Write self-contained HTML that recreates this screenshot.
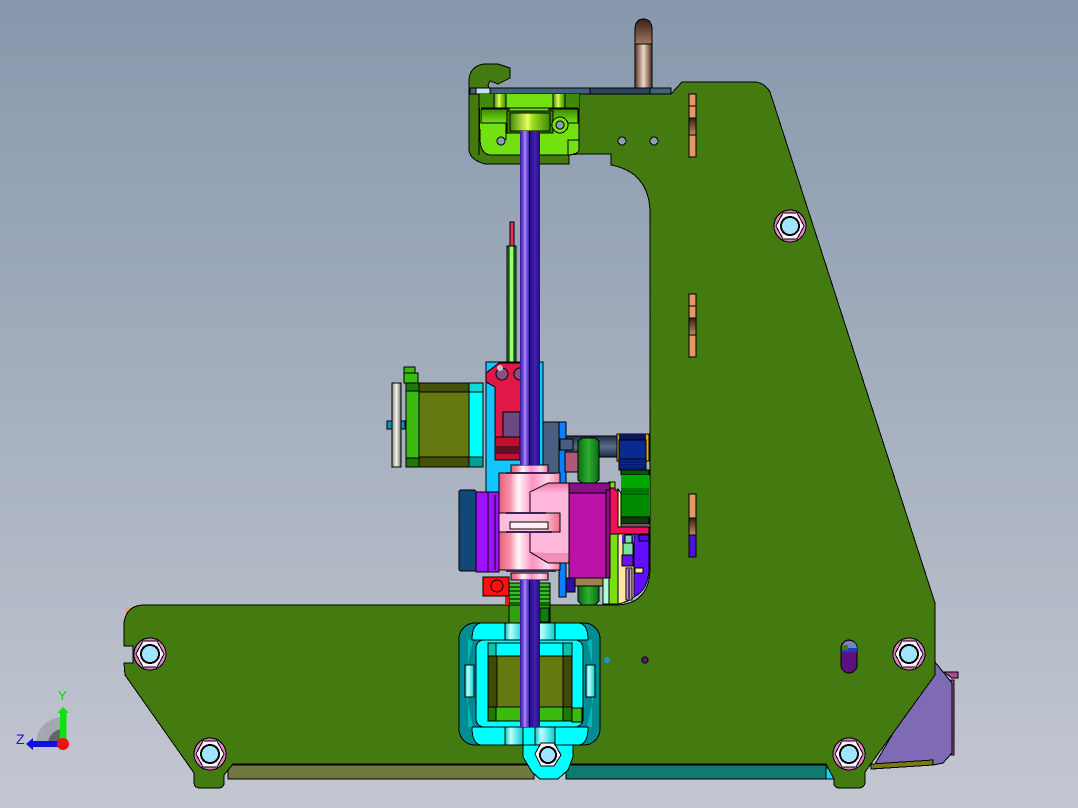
<!DOCTYPE html>
<html><head><meta charset="utf-8"><style>html,body{margin:0;padding:0;width:1078px;height:808px;overflow:hidden;background:#aab4c2}svg{display:block}text{font-family:"Liberation Sans",sans-serif}</style></head><body>
<svg width="1078" height="808" viewBox="0 0 1078 808" xmlns="http://www.w3.org/2000/svg" shape-rendering="crispEdges">
<defs>
<linearGradient id="bg" x1="0" y1="0" x2="0" y2="1"><stop offset="0" stop-color="#8798ac"/><stop offset="1" stop-color="#c3c7d1"/></linearGradient>
<linearGradient id="rodL" x1="0" y1="0" x2="1" y2="0"><stop offset="0" stop-color="#341896"/><stop offset=".3" stop-color="#6a48d4"/><stop offset=".5" stop-color="#ac8cfc"/><stop offset=".7" stop-color="#6a48d4"/><stop offset="1" stop-color="#341896"/></linearGradient>
<linearGradient id="rodR" x1="0" y1="0" x2="1" y2="0"><stop offset="0" stop-color="#260e88"/><stop offset=".5" stop-color="#4420b0"/><stop offset="1" stop-color="#220c80"/></linearGradient>
<linearGradient id="pin" x1="0" y1="0" x2="1" y2="0"><stop offset="0" stop-color="#5a3428"/><stop offset=".5" stop-color="#f0d8c8"/><stop offset="1" stop-color="#4a2c22"/></linearGradient>
<linearGradient id="pinTop" x1="0" y1="0" x2="0" y2="1"><stop offset="0" stop-color="#3a2018"/><stop offset="1" stop-color="#a07860"/></linearGradient>
<linearGradient id="pink" x1="0" y1="0" x2="1" y2="0"><stop offset="0" stop-color="#e4607c"/><stop offset=".18" stop-color="#f890a8"/><stop offset=".32" stop-color="#fff8fc"/><stop offset=".55" stop-color="#ff90c0"/><stop offset=".8" stop-color="#ffd8ee"/><stop offset="1" stop-color="#f08098"/></linearGradient>
<linearGradient id="slotP" x1="0" y1="0" x2="1" y2="0"><stop offset="0" stop-color="#ffb8dc"/><stop offset=".4" stop-color="#ffc8e6"/><stop offset=".75" stop-color="#ffc0d8"/><stop offset="1" stop-color="#e87088"/></linearGradient>
<linearGradient id="topP" x1="0" y1="0" x2="0" y2="1"><stop offset="0" stop-color="#f070a0"/><stop offset="1" stop-color="#ffb8dc"/></linearGradient>
<linearGradient id="cyanG" x1="0" y1="0" x2="1" y2="0"><stop offset="0" stop-color="#00c0c0"/><stop offset=".3" stop-color="#c0ffff"/><stop offset="1" stop-color="#00d0d0"/></linearGradient>
<linearGradient id="wheel" x1="0" y1="0" x2="1" y2="0"><stop offset="0" stop-color="#0a6a14"/><stop offset=".5" stop-color="#30b030"/><stop offset="1" stop-color="#0a6a14"/></linearGradient>
<linearGradient id="fly" x1="0" y1="0" x2="1" y2="0"><stop offset="0" stop-color="#8a8a80"/><stop offset=".5" stop-color="#f4f4ec"/><stop offset="1" stop-color="#6a6a60"/></linearGradient>
<linearGradient id="limeB" x1="0" y1="0" x2="1" y2="0"><stop offset="0" stop-color="#3e8c08"/><stop offset=".45" stop-color="#e8ff60"/><stop offset=".55" stop-color="#a0e020"/><stop offset="1" stop-color="#3a8a08"/></linearGradient>
<linearGradient id="limeV" x1="0" y1="0" x2="0" y2="1"><stop offset="0" stop-color="#3a8a08"/><stop offset="1" stop-color="#73e010"/></linearGradient>
<linearGradient id="slotG" x1="0" y1="0" x2="0" y2="1"><stop offset="0" stop-color="#3a2018"/><stop offset="1" stop-color="#c08a68"/></linearGradient>
<linearGradient id="barD" x1="0" y1="0" x2="0" y2="1"><stop offset="0" stop-color="#1c2c44"/><stop offset=".5" stop-color="#5a6c88"/><stop offset="1" stop-color="#1c2c44"/></linearGradient>
<g id="nut">
<circle r="16" fill="#e080c4" stroke="#000"/>
<polygon points="-14,0 -7,-13 7,-13 14,0 7,13 -7,13" fill="#fff2fc" stroke="#000"/>
<circle r="9" fill="#a0e4ff" stroke="#000" stroke-width="2"/>
</g>
</defs>
<rect width="1078" height="808" fill="url(#bg)"/>

<!-- wedge -->
<path d="M944 672h14v6h-6zM951 680h3v75h-3z" fill="#b0489a" stroke="#000"/>
<path d="M935 662L952 683V753L943 763L933 765L872 769Z" fill="#7f6bb5" stroke="#000"/>
<path d="M871 764L933 760V765L871 769Z" fill="#7b7a10" stroke="#000"/>

<!-- bottom strips -->
<rect x="228" y="765" width="306" height="14" fill="#70793f" stroke="#000"/>
<rect x="566" y="765" width="260" height="14" fill="#0f7a70" stroke="#000"/>
<rect x="826" y="768" width="8" height="11" fill="#10d8f0" stroke="#000"/>
<rect x="126" y="608" width="12" height="5" fill="#e8a078"/>

<!-- main plate -->
<path fill="#447b10" stroke="#000" stroke-width="1" fill-rule="evenodd" d="M469 88V80Q470 66 484 64H498L510 68V78L498 84L490 81L488 85L489 88H660V94H671L682 82H755Q765 83 770 92L935 603V675L865 772V783Q864 788 858 788H840Q834 788 834 783V779L826 764H233L224 775V783Q224 788 218 788H200Q194 788 194 782V773L125 675L124 663H133V646H124V623Q126 606 143 605H618Q649 603 650 570V210Q648 172 611 165V154H579L569 155V164H485Q470 160 469 150Z"/>

<!-- top bar -->
<rect x="470" y="88" width="6" height="6" fill="#3f627f" stroke="#000"/>
<rect x="476" y="88" width="14" height="6" fill="#c8e0ec" stroke="#000"/>
<rect x="490" y="88" width="100" height="6" fill="#3f627f" stroke="#000"/>
<rect x="590" y="88" width="60" height="6" fill="#2b4560" stroke="#000"/>
<rect x="650" y="88" width="21" height="6" fill="#3f627f" stroke="#000"/>
<!-- pin -->
<rect x="635" y="44" width="17" height="44" fill="url(#pin)" stroke="#000"/>
<path d="M635 44V28Q636 19 643 19Q651 19 652 28V44Z" fill="url(#pinTop)" stroke="#000"/>

<!-- lime block -->
<path d="M479 94H579V145Q578 154 569 155H490Q481 154 480 140Z" fill="#73e010" stroke="#000"/>
<rect x="479" y="94" width="100" height="14" fill="#73e010"/>
<rect x="479" y="94" width="15" height="14" fill="#3f8a08"/>
<rect x="565" y="94" width="14" height="14" fill="#3f8a08"/>
<rect x="494" y="94" width="12" height="14" fill="url(#limeB)"/>
<rect x="553" y="94" width="12" height="14" fill="url(#limeB)"/>
<path d="M479 94V155M494 94V108M506 94V108M553 94V108M565 94V108" stroke="#000" fill="none"/>
<path d="M481 108H578" stroke="#000" fill="none"/>
<rect x="481" y="109" width="28" height="14" fill="url(#limeV)" stroke="#000"/>
<rect x="549" y="109" width="29" height="14" fill="url(#limeV)" stroke="#000"/>
<path d="M506 123V140M568 140H579V150Q578 154 569 155H568Z" fill="#73e010" stroke="#000"/>
<rect x="507" y="111" width="46" height="22" fill="#3e8a08" stroke="#000"/>
<rect x="510" y="113" width="40" height="18" fill="url(#limeB)" stroke="#000"/>
<circle cx="560" cy="125" r="8" fill="#73e010" stroke="#000"/>
<circle cx="560" cy="125" r="4" fill="#8d9eb2" stroke="#000"/>
<circle cx="501" cy="141" r="4" fill="#8d9eb2" stroke="#000"/>
<circle cx="622" cy="141" r="4" fill="#8f9fb2" stroke="#000"/>
<circle cx="654" cy="141" r="4" fill="#8f9fb2" stroke="#000"/>

<!-- slots -->
<g stroke="#000">
<rect x="689" y="94" width="7" height="63" fill="#e8956a"/><rect x="689" y="118" width="7" height="17" fill="url(#slotG)"/><path d="M689 106h7" fill="none"/>
<rect x="689" y="294" width="7" height="63" fill="#e8956a"/><rect x="689" y="318" width="7" height="17" fill="url(#slotG)"/><path d="M689 306h7" fill="none"/>
<rect x="689" y="494" width="7" height="63" fill="#e8956a"/><rect x="689" y="518" width="7" height="17" fill="url(#slotG)"/><rect x="689" y="535" width="7" height="22" fill="#4a12d8"/>
</g>

<!-- small features -->
<rect x="841" y="640" width="16" height="33" rx="8" fill="#5d1080" stroke="#000"/>
<path d="M842 648Q843 641 849 641Q856 641 857 648V652H842Z" fill="#6f88b8"/>
<rect x="842" y="648" width="15" height="4" fill="#1a40c0"/>
<rect x="842" y="645" width="6" height="5" fill="#447b10"/>
<circle cx="645" cy="660" r="3" fill="#5a1a80" stroke="#000"/>
<circle cx="607" cy="660" r="3" fill="#1e90e0"/>

<!-- back rods -->
<rect x="510" y="222" width="4" height="24" fill="#e83060" stroke="#000"/>
<rect x="507" y="246" width="9" height="116" fill="#20a820" stroke="#000"/>
<rect x="509" y="246" width="5" height="116" fill="#a0ff70" stroke="#000"/>

<!-- far-side stack -->
<rect x="543" y="422" width="22" height="51" fill="#4a5f80" stroke="#000"/>
<rect x="560" y="436" width="60" height="21" fill="url(#barD)" stroke="#000"/>
<rect x="559" y="422" width="7" height="175" fill="#0a80ff" stroke="#000"/>
<rect x="560" y="439" width="13" height="11" fill="#4a5f80" stroke="#000"/>
<rect x="565" y="452" width="14" height="20" fill="#b05878" stroke="#000"/>
<path d="M578 441L582 438H595L599 441V480L595 483H582L578 480Z" fill="url(#wheel)" stroke="#000"/>
<path d="M578 570H599V601L595 605H582L578 601Z" fill="url(#wheel)" stroke="#000"/>
<rect x="617" y="434" width="32" height="27" fill="#e8a810" stroke="#000"/>
<rect x="619" y="434" width="27" height="6" fill="#081858"/>
<rect x="619" y="440" width="27" height="19" fill="#0a2a90" stroke="#000"/>
<rect x="619" y="459" width="27" height="11" fill="#0a2a90" stroke="#000"/>
<path d="M619 462h27M619 465h27M619 468h27" stroke="#001050" fill="none"/>
<rect x="621" y="470" width="28" height="5" fill="#005a10" stroke="#000"/>
<rect x="621" y="475" width="28" height="16" fill="#00a800"/>
<rect x="621" y="491" width="28" height="26" fill="#008a00"/>
<path d="M621 489h28M621 491h28M621 494h28M621 517h28" stroke="#004010" fill="none"/>
<rect x="621" y="517" width="28" height="7" fill="#103a10" stroke="#000"/>
<rect x="619" y="524" width="30" height="5" fill="#805068"/>
<path d="M634 534H649V570Q648 590 634 597Z" fill="#6010ff" stroke="#000"/>
<rect x="639" y="535" width="10" height="6" fill="#4a10e0" stroke="#000"/>
<rect x="635" y="568" width="8" height="5" fill="#ffe8a0" stroke="#000"/>
<path d="M618 534H634V597Q628 602 618 604Z" fill="#ffe8a0" stroke="#000"/>
<rect x="622" y="535" width="11" height="8" fill="#5020e0"/>
<rect x="625" y="535" width="7" height="8" fill="#80e0a0" stroke="#000"/>
<rect x="623" y="543" width="10" height="12" fill="#80e0a0" stroke="#000"/>
<rect x="622" y="555" width="11" height="11" fill="#6a10f0" stroke="#000"/>
<rect x="626" y="568" width="6" height="32" fill="#c0a0c0" stroke="#000"/>
<rect x="628" y="569" width="2" height="30" fill="#603080"/>
<rect x="609" y="534" width="9" height="70" fill="#78e010" stroke="#000"/>
<rect x="603" y="578" width="6" height="26" fill="#a8ffd8" stroke="#000"/>
<path d="M618 489L621 493V529H618Z" fill="#ffe8a0" stroke="#000"/>
<path d="M609 488H615V490H618V527H649V534H609Z" fill="#f0105a" stroke="#000"/>
<rect x="609" y="482" width="6" height="6" fill="#78e010" stroke="#000"/>
<rect x="573" y="578" width="30" height="8" fill="#a08050" stroke="#000"/>
<rect x="566" y="578" width="9" height="14" fill="#3010a0" stroke="#000"/>

<!-- blue plate -->
<rect x="486" y="362" width="57" height="131" fill="#10c8ff" stroke="#000"/>
<path d="M499 363H524V437H495V387L486 382V373Z" fill="#e01848" stroke="#000"/>
<circle cx="502" cy="374" r="6" fill="#8a5080" stroke="#000"/>
<circle cx="500" cy="368" r="3" fill="#c0c0c8"/>
<circle cx="520" cy="374" r="6" fill="#8a5080" stroke="#000"/>
<rect x="503" y="412" width="17" height="25" fill="#6a4a80" stroke="#000"/>
<rect x="495" y="437" width="25" height="23" fill="#c01030" stroke="#000"/>
<rect x="495" y="446" width="25" height="8" fill="#601020"/>

<!-- stepper -->
<rect x="387" y="421" width="18" height="8" fill="#1090c0" stroke="#000"/>
<rect x="392" y="383" width="9" height="84" fill="url(#fly)" stroke="#000"/>
<rect x="404" y="367" width="11" height="6" fill="#3cba10" stroke="#000"/>
<rect x="404" y="373" width="14" height="10" fill="#3cba10" stroke="#000"/>
<rect x="406" y="383" width="13" height="84" fill="#3cba10" stroke="#000"/>
<rect x="406" y="383" width="13" height="8" fill="#207808" stroke="#000"/>
<rect x="406" y="458" width="13" height="9" fill="#207808" stroke="#000"/>
<rect x="419" y="383" width="50" height="84" fill="#455008" stroke="#000"/>
<rect x="419" y="392" width="50" height="65" fill="#647a10" stroke="#000"/>
<rect x="469" y="383" width="14" height="84" fill="#00ffff" stroke="#000"/>
<rect x="469" y="383" width="14" height="9" fill="#10d8d8" stroke="#000"/>
<rect x="469" y="457" width="14" height="10" fill="#00a098" stroke="#000"/>

<!-- spring below and green -->
<rect x="509" y="605" width="41" height="18" fill="#30a010" stroke="#000"/>
<rect x="540" y="608" width="9" height="14" fill="#0a8010" stroke="#000"/>
<g stroke="#000"><rect x="509" y="583" width="41" height="22" fill="#30c020"/><path d="M509 587h41M509 591h41M509 595h41M509 599h41M509 603h41" fill="none"/></g>
<rect x="505" y="577" width="4" height="28" fill="#e81818"/>
<rect x="483" y="577" width="26" height="19" fill="#ff1010" stroke="#000"/>
<circle cx="497" cy="586" r="6" fill="#ff1010" stroke="#000"/>

<!-- dark blue + purple block -->
<rect x="459" y="490" width="17" height="81" rx="2" fill="#104878" stroke="#000"/>
<rect x="476" y="492" width="23" height="80" fill="#a010ff" stroke="#000"/>
<path d="M488 492v80M495 495v75" stroke="#000" fill="none"/>

<!-- pink bearing body -->
<rect x="511" y="465" width="37" height="8" fill="url(#pink)" stroke="#000"/>
<rect x="499" y="473" width="61" height="97" fill="url(#pink)" stroke="#000"/>
<rect x="511" y="573" width="37" height="7" fill="url(#pink)" stroke="#000"/>
<path d="M530 492L548 483H569V563H548L530 552Z" fill="#ffb8dc" stroke="#000"/>
<path d="M530 492L548 483H569V493H530Z" fill="url(#topP)"/>
<path d="M530 552L548 553H569V563H548Z" fill="#f090b8"/>
<path d="M530 492L548 483H569M530 552L548 563H569" stroke="#000" fill="none"/>
<path d="M499 513H560V532H499Z" fill="url(#slotP)" stroke="#000"/>
<rect x="510" y="522" width="38" height="7" fill="#ffeef8" stroke="#000"/>
<path d="M506 513h40M506 532h46M506 571h50M506 473h50" stroke="#402050" fill="none" stroke-width="2"/>
<rect x="569" y="483" width="41" height="95" fill="#b812a8" stroke="#000"/>
<rect x="569" y="483" width="41" height="10" fill="#8a108a" stroke="#000"/>
<rect x="606" y="490" width="4" height="88" fill="#900c88" stroke="#000"/>

<!-- bottom motor yoke -->
<path d="M523 745V757L532 772L540 779H558L568 770L573 757V745Z" fill="#00ffff" stroke="#000"/>
<rect x="459" y="623" width="141" height="122" rx="16" fill="#008c90" stroke="#000"/>
<path d="M468 640H473L467 668V700L473 727H468Z" fill="#00b8bc"/>
<path d="M592 640H587L593 668V700L587 727H592Z" fill="#00b8bc"/>
<path d="M472 640Q472 623 482 623H578Q588 623 588 640Z" fill="#00ffff" stroke="#000"/>
<path d="M472 727Q472 745 482 745H578Q588 745 588 727Z" fill="#00ffff" stroke="#000"/>
<rect x="505" y="623" width="18" height="17" fill="url(#cyanG)" stroke="#000"/>
<rect x="535" y="623" width="20" height="17" fill="url(#cyanG)" stroke="#000"/>
<rect x="505" y="727" width="18" height="18" fill="url(#cyanG)" stroke="#000"/>
<rect x="535" y="727" width="20" height="18" fill="url(#cyanG)" stroke="#000"/>
<rect x="476" y="640" width="107" height="87" rx="8" fill="#00ffff" stroke="#000"/>
<rect x="465" y="665" width="9" height="32" fill="url(#cyanG)" stroke="#000"/>
<rect x="586" y="665" width="9" height="32" fill="url(#cyanG)" stroke="#000"/>
<rect x="488" y="643" width="84" height="13" fill="#00ffff" stroke="#000"/>
<rect x="488" y="643" width="8" height="13" fill="#10c0a8" stroke="#000"/>
<rect x="563" y="643" width="9" height="13" fill="#10c0a8" stroke="#000"/>
<rect x="488" y="656" width="9" height="51" fill="#3f4a08" stroke="#000"/>
<rect x="497" y="656" width="66" height="51" fill="#647a10" stroke="#000"/>
<rect x="563" y="656" width="9" height="51" fill="#3f4a08" stroke="#000"/>
<rect x="488" y="707" width="84" height="14" fill="#3cba10" stroke="#000"/>
<rect x="488" y="707" width="8" height="14" fill="#207808" stroke="#000"/>
<rect x="563" y="707" width="9" height="14" fill="#207808" stroke="#000"/>
<rect x="572" y="708" width="10" height="14" fill="#3cba10" stroke="#000"/>

<!-- lead rod -->
<g>
<rect x="520" y="131" width="10" height="334" fill="url(#rodL)"/><rect x="530" y="131" width="10" height="334" fill="url(#rodR)"/>
<rect x="529" y="131" width="1" height="334" fill="#000"/>
<rect x="520" y="580" width="10" height="147" fill="url(#rodL)"/><rect x="530" y="580" width="10" height="147" fill="url(#rodR)"/>
<rect x="529" y="580" width="1" height="147" fill="#000"/>
</g>

<!-- nuts -->
<use href="#nut" x="790" y="226"/>
<use href="#nut" x="150" y="654"/>
<use href="#nut" x="909" y="654"/>
<use href="#nut" x="210" y="754"/>
<use href="#nut" x="849" y="754"/>
<g transform="translate(548,755)"><polygon points="-13,-1 -7,-12 6,-12 13,0 6,11 -7,11" fill="#fff0fc" stroke="#000"/><circle r="8" fill="#a0e4ff" stroke="#000" stroke-width="2"/></g>

<!-- triad -->
<g shape-rendering="auto">
<path d="M36 744A27 27 0 0 1 63 717V744Z" fill="#a3a7ae"/>
<path d="M48 744A15 15 0 0 1 63 729V744Z" fill="#62666c"/>
<path d="M60 742V713H57.5L63 707L69 713H66.5V742Z" fill="#10e010"/>
<path d="M60 741H33V738L26 744L33 750V747H60Z" fill="#1010e0"/>
<circle cx="63" cy="744" r="6" fill="#f01010"/>
<text x="16" y="744" font-size="14" fill="#1818e0">Z</text>
<text x="58" y="700" font-size="13" fill="#10d010">Y</text>
</g>
</svg>
</body></html>
